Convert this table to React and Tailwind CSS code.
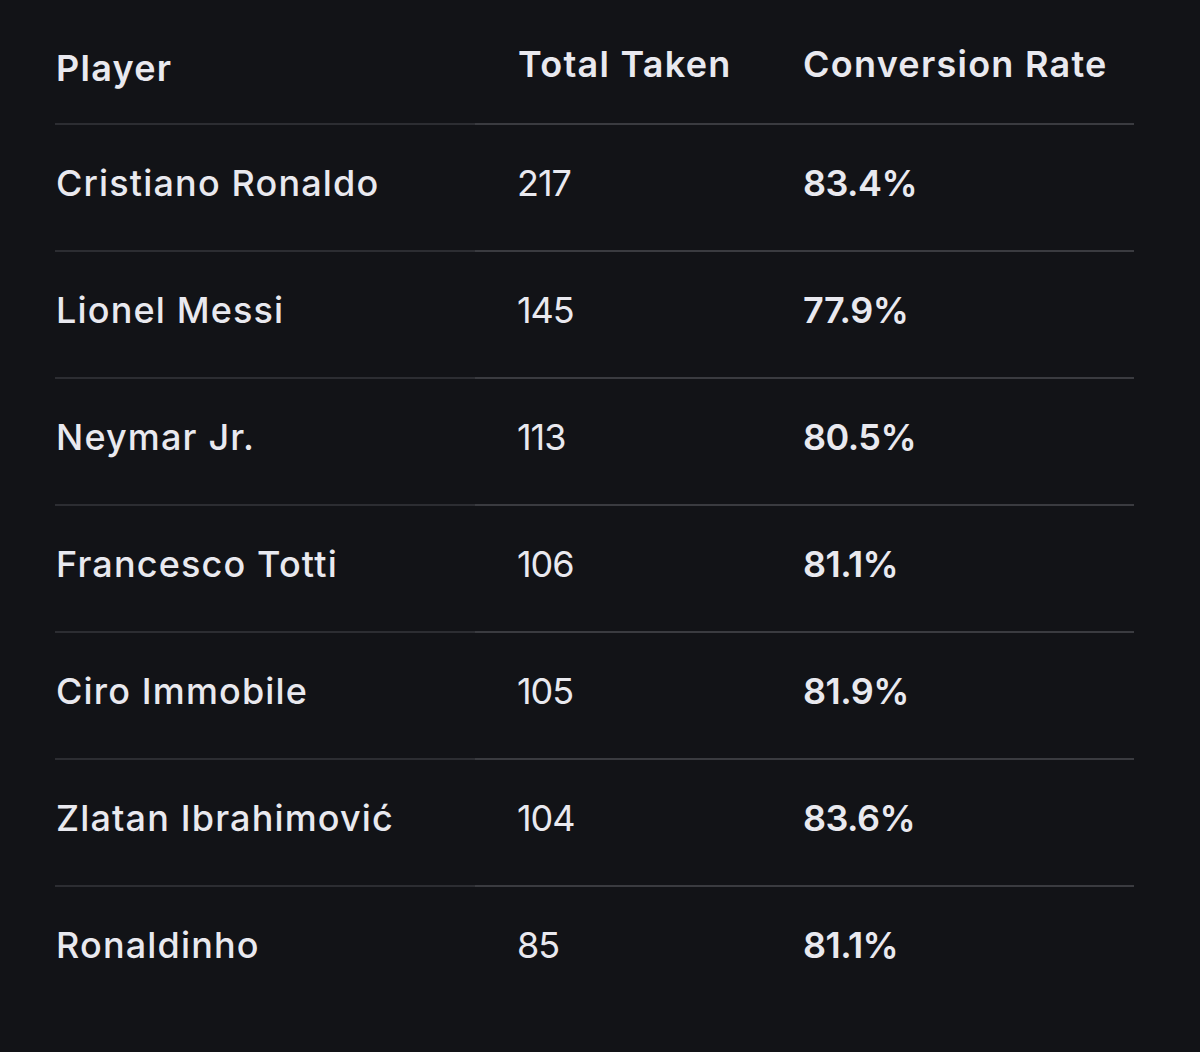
import React from "react";

const rows = [
  ["Cristiano Ronaldo", "217", "83.4%"],
  ["Lionel Messi", "145", "77.9%"],
  ["Neymar Jr.", "113", "80.5%"],
  ["Francesco Totti", "106", "81.1%"],
  ["Ciro Immobile", "105", "81.9%"],
  ["Zlatan Ibrahimović", "104", "83.6%"],
  ["Ronaldinho", "85", "81.1%"],
];

export default function App() {
  return (
    <div
      className="w-[1200px] h-[1052px] bg-[#121317] text-[#e9e9ef] overflow-hidden"
      style={{ fontFamily: "Inter, 'Noto Sans', sans-serif" }}
    >
      <div className="pl-[55px] w-[1134px]">
        <div className="grid grid-cols-[420px_285px_374px] text-[36px] leading-[44px] font-semibold tracking-[0.035em]">
          <div className="pt-[46px] pb-[33px] pl-[1px] border-b-2 border-[#2c2d32]">Player</div>
          <div className="pt-[42px] pb-[37px] pl-[43px] border-b-2 border-[#3a3b40]">Total Taken</div>
          <div className="pt-[42px] pb-[37px] pl-[43px] border-b-2 border-[#3a3b40]">Conversion Rate</div>
        </div>
        {rows.map(([name, total, rate], i) => (
          <div
            key={name}
            className="grid grid-cols-[420px_285px_374px] text-[36px] leading-[44px]"
          >
            <div className={"pt-[36px] pb-[45px] pl-[1px] font-medium tracking-[0.032em] " + (i < rows.length - 1 ? "border-b-2 border-[#2c2d32]" : "")}>
              {name}
            </div>
            <div className={"pt-[36px] pb-[45px] pl-[42px] font-normal tracking-[-0.03em] " + (i < rows.length - 1 ? "border-b-2 border-[#3a3b40]" : "")}>
              {total}
            </div>
            <div className={"pt-[36px] pb-[45px] pl-[43px] font-semibold tracking-[-0.015em] " + (i < rows.length - 1 ? "border-b-2 border-[#3a3b40]" : "")}>
              {rate}
            </div>
          </div>
        ))}
      </div>
    </div>
  );
}
